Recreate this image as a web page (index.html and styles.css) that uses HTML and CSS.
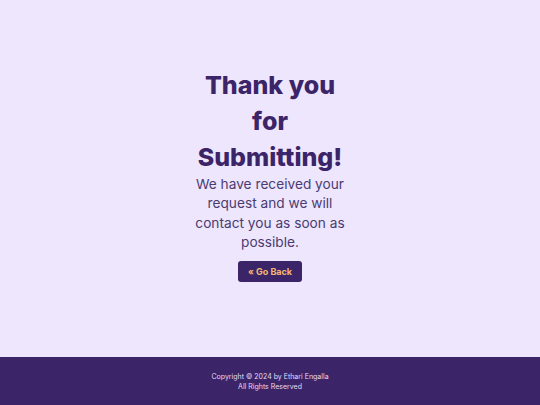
FILE: index.html
```html
<!DOCTYPE html>
<html lang="en">
<head>
<meta charset="utf-8">
<title>Thank you</title>
<link rel="stylesheet" href="styles.css">
</head>
<body>
<div class="page">
  <main class="main">
    <section class="card">
      <h1 class="title">Thank you for Submitting!</h1>
      <p class="message">We have received your request and we will contact you as soon as possible.</p>
      <a class="back" href="#">&laquo; Go Back</a>
    </section>
  </main>
  <footer class="footer">
    <p class="footer-line">Copyright &copy; 2024 by Ethari Engalla</p>
    <p class="footer-line">All Rights Reserved</p>
  </footer>
</div>
</body>
</html>
```
FILE: styles.css
```css
* { box-sizing: border-box; }
html, body { margin: 0; padding: 0; }
body {
  background: #ede6fd;
  font-family: "Inter", "Noto Sans", sans-serif;
  color: #3c2468;
}
.page {
  min-height: 405px;
  display: flex;
  flex-direction: column;
}
.main {
  flex: 1;
  display: flex;
  align-items: center;
  justify-content: center;
}
.card {
  width: 160px;
  display: flex;
  flex-direction: column;
  align-items: center;
  text-align: center;
  margin-top: -8px;
}
.title {
  margin: 0;
  font-size: 25px;
  line-height: 36px;
  font-weight: 800;
  color: #3c2468;
}
.message {
  margin: 0;
  font-size: 13.7px;
  line-height: 19.3px;
  color: #4b3b72;
}
.back {
  margin-top: 9px;
  display: inline-flex;
  align-items: center;
  justify-content: center;
  width: 64px;
  height: 21px;
  background: #3c2468;
  color: #f2b872;
  font-size: 9px;
  font-weight: 700;
  text-decoration: none;
  border-radius: 3px;
}
.footer {
  height: 48px;
  background: #3c2468;
  display: flex;
  flex-direction: column;
  align-items: center;
  justify-content: center;
  padding-top: 1px;
}
.footer-line {
  margin: 0;
  font-size: 7px;
  line-height: 10px;
  color: #e4dcf5;
}
```
